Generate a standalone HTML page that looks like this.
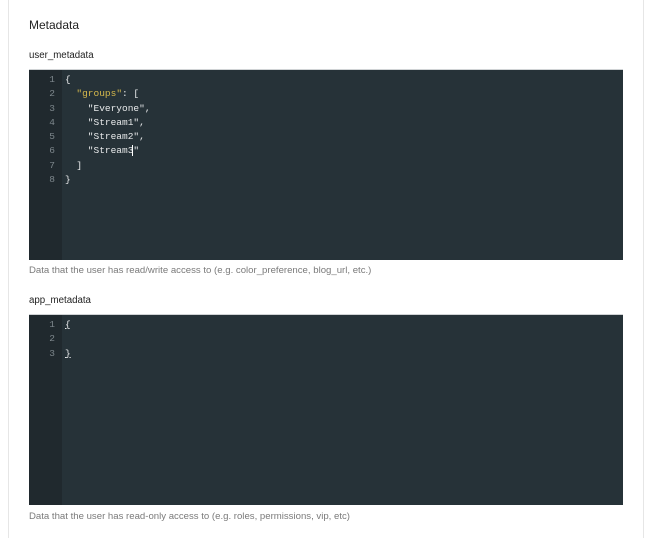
<!DOCTYPE html>
<html><head><style>
body{margin:0;width:645px;height:534px;background:#fff;font-family:"Liberation Sans",sans-serif;position:relative;overflow:hidden}
.card{position:absolute;left:8px;top:-2px;width:634px;height:540px;border-left:1px solid #e6e6e6;border-right:1px solid #e6e6e6}
.t{position:absolute;color:#222}
.ed{position:absolute;left:29px;width:594px;height:190px;background:#263238;border-top:1px solid #d0d3d5}
.gut{position:absolute;left:0;top:0;bottom:0;width:33px;background:#20292e}
.code{position:absolute;left:0;top:3px;font-family:"Liberation Mono",monospace;font-size:9.5px;line-height:14.3px;color:#e8eaeb;white-space:pre}
.ln{display:inline-block;width:26px;text-align:right;color:#7d878c;margin-right:10px}
.k{color:#d6b94c}
.help{position:absolute;left:29px;font-size:9.6px;color:#7a7a7a}
</style></head><body>
<div class="card"></div>
<div class="t" style="left:29px;top:18px;font-size:12px">Metadata</div>
<div class="t" style="left:29px;top:50px;font-size:9.7px">user_metadata</div>
<div class="ed" style="top:69px"><div class="gut"></div><div class="code"><span class="ln">1</span>{
<span class="ln">2</span>  <span class="k">"groups"</span>: [
<span class="ln">3</span>    "Everyone",
<span class="ln">4</span>    "Stream1",
<span class="ln">5</span>    "Stream2",
<span class="ln">6</span>    "Stream3<span style="border-left:1px solid #fff;margin-left:-1px"></span>"
<span class="ln">7</span>  ]
<span class="ln">8</span>}</div></div>
<div class="help" style="top:265px">Data that the user has read/write access to (e.g. color_preference, blog_url, etc.)</div>
<div class="t" style="left:29px;top:295px;font-size:9.7px">app_metadata</div>
<div class="ed" style="top:314px"><div class="gut"></div><div class="code"><span class="ln">1</span><u>{</u>
<span class="ln">2</span>
<span class="ln">3</span><u>}</u></div></div>
<div class="help" style="top:511px">Data that the user has read-only access to (e.g. roles, permissions, vip, etc)</div>
</body></html>
